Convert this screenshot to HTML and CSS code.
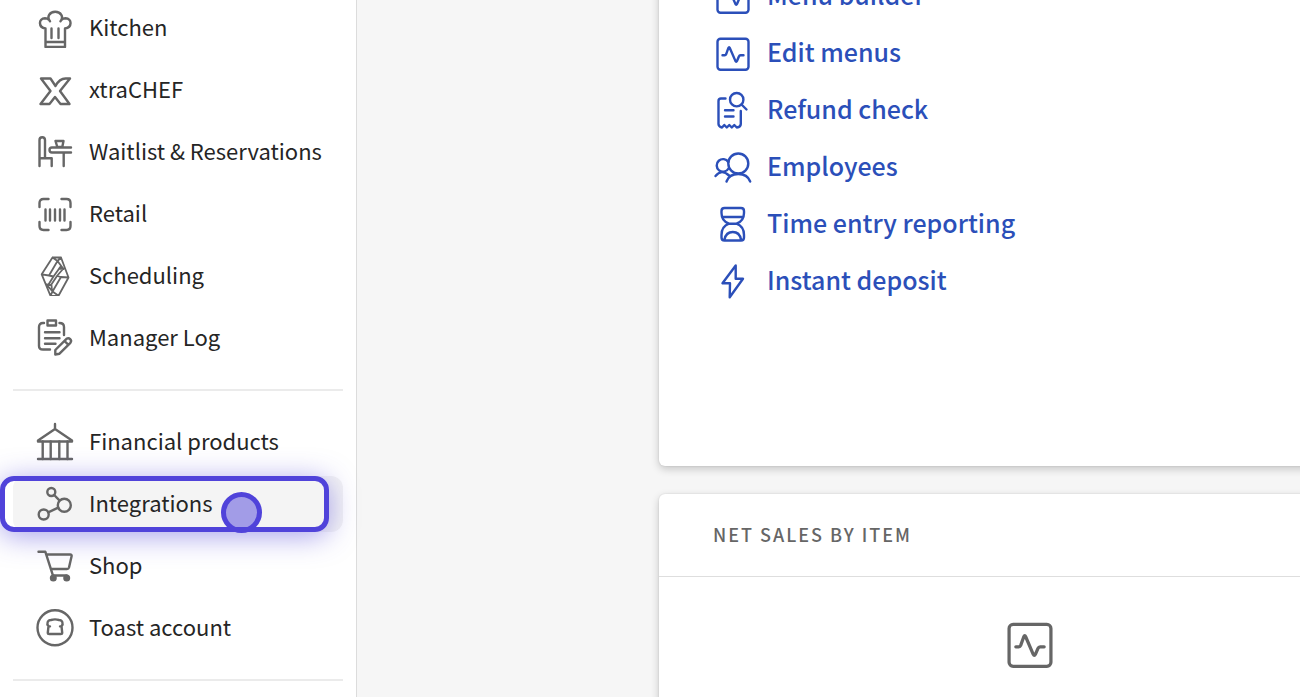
FILE: index.html
```
<!DOCTYPE html>
<html lang="en">
<head>
    <meta charset="UTF-8">
    <meta name="viewport" content="width=device-width, initial-scale=1.0">
    <title>Toast</title>
    <link rel="stylesheet" href="styles.css">
</head>
<body>
    <svg class="sprite" aria-hidden="true">
        <symbol id="pulse" viewBox="0 0 40 40">
            <rect x="4.5" y="4.8" width="31" height="31" rx="3"/>
            <path d="M9.5 21.3h2.2q1 0 1.4-1l2.3-6.4q.7-1.6 1.4 0l5.6 13q.8 1.6 1.6 0l1.9-4.4q.5-1.2 1.6-1.2h3"/>
        </symbol>
    </svg>

    <nav class="sidebar">
        <a class="nav-item" href="#">
            <svg class="icon" viewBox="0 0 40 40"><path d="M10.5 39V20.5C3.200 19.500 3.200 10.600 10 10.300q2.400 0 4 1.500M30 39V20.500c7.300-1 7.300-9.900.5-10.200q-2.400 0-4 1.500M15 13.300C11.500 9 14.500 3.800 20.200 3.800s8.800 5.200 5.300 9.500M10.500 34H30M10.500 39H30"/><path d="M16.500 20.500v9.500M23.500 20.500v9.500"/></svg>
            <span>Kitchen</span>
        </a>
        <a class="nav-item" href="#">
            <svg class="icon" viewBox="0 0 40 40"><path d="M6 8.500h9.500l5 7.500q4-7.500 10-7.500h4.500L25 21l9.500 13h-9L20 27l-5.500 7H5.500l10-13Z"/></svg>
            <span>xtraCHEF</span>
        </a>
        <a class="nav-item" href="#">
            <svg class="icon" viewBox="0 0 40 40"><path d="M4.500 34V8q0-2.700 2.700-2.700T10 8v18.300h6.700V34M4.500 26.300H10M36 15.500H17q-2.500 0-2.500 2.500t2.500 2.500h19M28.700 20.500V34M20.500 9h8l-1.200 6h-5Z"/></svg>
            <span>Waitlist &amp; Reservations</span>
        </a>
        <a class="nav-item" href="#">
            <svg class="icon" viewBox="0 0 40 40"><path d="M4.500 13V9q0-4 4-4h5M26.500 5h5q4 0 4 4v4M4.500 28v4q0 4 4 4h5M26.500 36h5q4 0 4-4v-4"/><path d="M10.500 15.500v11M15 15.500v11M20 15.500v11M25 15.500v11M29.500 15.500v11"/></svg>
            <span>Retail</span>
        </a>
        <a class="nav-item" href="#">
            <svg class="icon thin" viewBox="0 0 40 40"><path d="M17.500 1.500H26l7.500 20-10 18.300h-8L6.700 18.300ZM6.700 18.300l7.300 1.200L22.500 5M33.500 21.500L26 21 17.500 35.500M17.500 1.500l5 3.500L26 1.500M15.500 39.800l2-4.300 6 4.300M22.500 5l6 8-4.500-.5M17.500 35.500l-6-7 4.500.5M14 19.500l4.500 1L26 10M18.500 20.500l-5 8M21.500 20.500L28 13M26 21l-4-1-6 9M17 35l-.5-6"/></svg>
            <span>Scheduling</span>
        </a>
        <a class="nav-item" href="#">
            <svg class="icon" viewBox="0 0 40 40"><path d="M9 5H8Q4 5 4 9v19q0 3.500 4 3.500h7M24.500 5q4.500 0 4.500 4v8M12.500 2.500H21V7.500h-8.500ZM10 14.300h14.500M10 20.300h14.500M10 25.700h10.500M20.300 36.500v-4.500L31.500 20.800q2-1.300 3.700.4t.2 3.600L24.500 35.700ZM29.500 23l3.700 3.700"/></svg>
            <span>Manager Log</span>
        </a>

        <hr class="divider">

        <a class="nav-item" href="#">
            <svg class="icon" viewBox="0 0 40 40"><path d="M20 2v5L3 18.500v1h34v-1L20 7M3 37h34"/><path d="M7.700 19.500V37M15.700 19.500V37M24.300 19.500V37M32.500 19.500V37"/></svg>
            <span>Financial products</span>
        </a>
        <a class="nav-item active" href="#">
            <svg class="icon" viewBox="0 0 40 40"><circle cx="16.300" cy="8" r="4"/><circle cx="29.300" cy="21.300" r="6.500"/><circle cx="8.700" cy="30.500" r="5"/><path d="M19.200 11l5.200 5.400M13.200 28.300l10-4.600"/></svg>
            <span>Integrations</span>
            <i class="focus-ring"></i>
            <i class="pointer"></i>
        </a>
        <a class="nav-item" href="#">
            <svg class="icon" viewBox="0 0 40 40"><path d="M3.500 5.700h6.800l8 25M11.500 8.500h23.700q1.800 0 1.400 1.700L34 21.500q-.4 1.500-2 1.500H16M18.300 29.500h13.400"/><circle class="solid" cx="18.300" cy="32" r="2.300"/><circle class="solid" cx="31.700" cy="32" r="2.300"/></svg>
            <span>Shop</span>
        </a>
        <a class="nav-item" href="#">
            <svg class="icon" viewBox="0 0 40 40"><circle cx="20" cy="19.700" r="17.500"/><path d="M13.500 18.200c-2.300-2.500-.8-6.200 2.500-6.200q4-1.200 8 0c3.300 0 4.800 3.700 2.500 6.200l.7 6.500q0 1.300-1.500 1.300H14.300q-1.500 0-1.500-1.300ZM13.500 18.200l1.500.2M26.500 18.200l-1.500.2"/></svg>
            <span>Toast account</span>
        </a>

        <hr class="divider">
    </nav>

    <main class="content">
        <section class="card shortcuts">
            <a class="shortcut" href="#">
                <svg class="icon"><use href="#pulse"/></svg>
                <span>Menu builder</span>
            </a>
            <a class="shortcut" href="#">
                <svg class="icon"><use href="#pulse"/></svg>
                <span>Edit menus</span>
            </a>
            <a class="shortcut" href="#">
                <svg class="icon" viewBox="0 0 40 40"><path d="M12.500 7.500H8Q5.500 7.500 5.500 10v23q0 2.500 3.500 3.500l2.300-2.500 2.500 2.500 2.500-2.500 2.500 2.500 2.500-2.500 2.500 2.500q4-.5 4-3.500V20M12 19.300h8.500M12 25.500h8.500M28.500 13.500l5 5"/><circle cx="23.700" cy="8.700" r="6.700"/></svg>
                <span>Refund check</span>
            </a>
            <a class="shortcut" href="#">
                <svg class="icon" viewBox="0 0 40 40"><circle cx="25.300" cy="15.500" r="10"/><path d="M13.500 33.500C17 23.500 33.500 23.500 37.200 33.500M2.500 28q6-7.500 13.500-.5"/><path d="M15.500 20.500A6.300 6.300 0 1 1 15.300 14"/></svg>
                <span>Employees</span>
            </a>
            <a class="shortcut" href="#">
                <svg class="icon" viewBox="0 0 40 40"><path d="M11.500 3h16.500q3 0 3 3v2q0 8-7.500 10.700Q31 21.500 31 30v2.500q0 3-3 3H11.500q-3 0-3-3V30q0-8.500 7.500-11.300Q8.500 16 8.500 8V6q0-3 3-3ZM9.200 12h21M16 18.700h7.500M11.500 34.500q1.500-7.500 8.300-7.500t8.200 7.500"/></svg>
                <span>Time entry reporting</span>
            </a>
            <a class="shortcut" href="#">
                <svg class="icon" viewBox="0 0 40 40"><path d="M22.700 3.500 9.500 21.300H17L16.700 35.300 30 16.700h-7.300Z"/></svg>
                <span>Instant deposit</span>
            </a>
        </section>

        <section class="card">
            <h2 class="card-title">Net sales by item</h2>
            <div class="card-body">
                <svg class="icon large"><use href="#pulse"/></svg>
            </div>
        </section>
    </main>
</body>
</html>
```
FILE: styles.css
```
* {
    box-sizing: border-box;
}
body {
    margin: 0;
    height: 100vh;
    display: flex;
    overflow: hidden;
    background: #f6f6f6;
    color: #252525;
    font-family: "Noto Sans CJK SC", "Noto Sans", sans-serif;
}
a {
    color: inherit;
    text-decoration: none;
}
.sprite {
    display: none;
}
.icon {
    flex: none;
    width: 40px;
    height: 40px;
    fill: none;
    stroke: currentColor;
    stroke-width: 2.4;
    stroke-linecap: round;
    stroke-linejoin: round;
}
.solid {
    fill: currentColor;
}

/* sidebar */
.sidebar {
    flex: none;
    width: 357px;
    padding: 0 13px;
    display: flex;
    flex-direction: column;
    background: #fff;
    border-right: 1px solid #dcdcdc;
}
.nav-item {
    position: relative;
    flex: none;
    display: flex;
    align-items: center;
    gap: 14px;
    height: 56px;
    margin-bottom: 6px;
    padding-left: 22px;
    border-radius: 12px;
    font-size: 22px;
    line-height: 32px;
    white-space: nowrap;
}
.nav-item span {
    padding-bottom: 4px;
}
.nav-item .icon {
    color: #666;
}
.nav-item .thin {
    stroke-width: 1.8;
}
.active {
    background: #f4f4f4;
}
.divider {
    flex: none;
    width: 100%;
    height: 2px;
    margin: 17px 0 23px;
    border: 0;
    background: #ebebeb;
}
.focus-ring {
    position: absolute;
    top: 0;
    bottom: 0;
    left: -13px;
    right: 14px;
    border: 5px solid #5043da;
    border-radius: 14px;
    box-shadow: 0 4px 28px rgba(80, 67, 218, 0.5);
}
.pointer {
    position: absolute;
    left: 208px;
    top: 16px;
    width: 41px;
    height: 41px;
    border: 5px solid #5043da;
    border-radius: 50%;
    background: rgba(80, 67, 218, 0.5);
}

/* dashboard cards run past the right edge of the window */
.content {
    flex: 1;
    min-width: 0;
    display: flex;
    flex-direction: column;
    gap: 28px;
    padding-left: 302px;
    margin-right: -101px;
}
.card {
    flex: none;
    background: #fff;
    border-radius: 6px;
    box-shadow: 0 0 2px rgba(0, 0, 0, 0.12), 0 3px 8px rgba(0, 0, 0, 0.2);
}
.shortcuts {
    display: flex;
    flex-direction: column;
    align-items: flex-start;
    gap: 17px;
    margin-top: -60px;
    padding: 37px 54px 164px;
    color: #2b4fb9;
}
.shortcut {
    display: flex;
    align-items: center;
    gap: 14px;
    height: 40px;
    font-size: 25px;
    font-weight: 500;
    line-height: 36px;
    white-space: nowrap;
}
.shortcut span {
    padding-bottom: 6px;
}
.card-title {
    margin: 0;
    padding: 26px 54px 28px;
    border-bottom: 1px solid #dedede;
    color: #666;
    font-size: 18px;
    font-weight: 500;
    line-height: 28px;
    letter-spacing: 2px;
    text-transform: uppercase;
}
.card-body {
    display: flex;
    justify-content: center;
    padding: 41px 54px 60px;
    color: #666;
}
.large {
    width: 54px;
    height: 54px;
}
```
